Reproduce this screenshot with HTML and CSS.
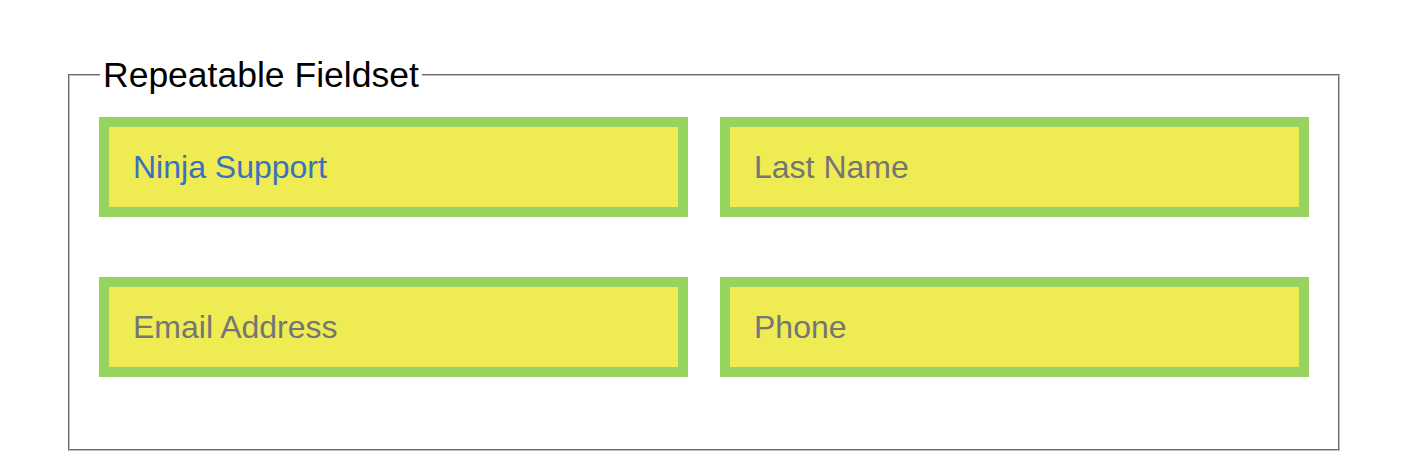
FILE: index.html
```html
<!DOCTYPE html>
<html>
<head>
<meta charset="utf-8">
<link rel="stylesheet" href="styles.css">
</head>
<body>
<div class="page">
  <fieldset class="repeat">
    <legend class="repeat-legend">Repeatable Fieldset</legend>
    <div class="grid">
      <input class="field" type="text" value="Ninja Support">
      <input class="field" type="text" placeholder="Last Name">
      <input class="field" type="text" placeholder="Email Address">
      <input class="field" type="text" placeholder="Phone">
    </div>
  </fieldset>
</div>
</body>
</html>
```
FILE: styles.css
```css
html, body {
  margin: 0;
  padding: 0;
  background: #ffffff;
}
.page {
  padding: 55px 76px 0 68px;
  font-family: "Liberation Sans", Arial, sans-serif;
}
.repeat {
  margin: 0;
  border: 2px groove #c0c0c0;
  padding: 22px 29px 72px 29px;
}
.repeat-legend {
  font-size: 35.5px;
  line-height: 40px;
  padding: 0 3px;
  margin-left: 1px;
  color: #000;
}
.grid {
  display: grid;
  grid-template-columns: 1fr 1fr;
  column-gap: 32px;
  row-gap: 60px;
}
.field {
  box-sizing: border-box;
  width: 100%;
  height: 100px;
  margin: 0;
  border: 10px solid #96d35f;
  background: #eeeb53;
  padding: 0 24px;
  font-family: "Liberation Sans", Arial, sans-serif;
  font-size: 32px;
  line-height: 38px;
  color: #3a70c2;
  outline: none;
}
.field::placeholder {
  color: #757575;
  opacity: 1;
}
```
